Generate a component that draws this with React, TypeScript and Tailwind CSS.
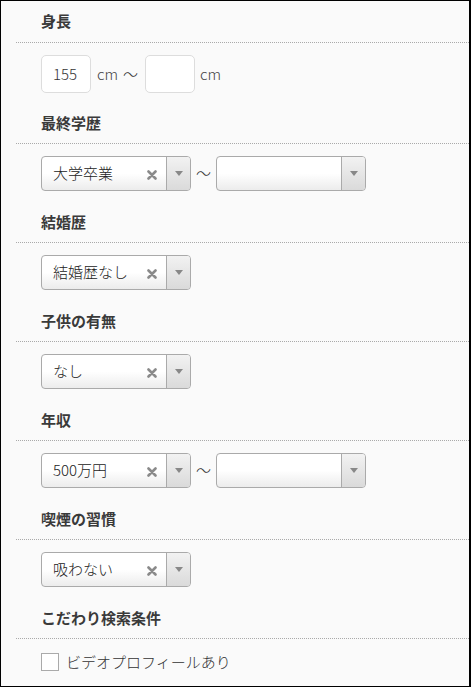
import * as React from 'react';

const font = { fontFamily: '"Noto Sans CJK JP", "Noto Sans", sans-serif' };

function Heading({ label, first = false }: { label: string; first?: boolean }) {
  return (
    <div
      className={`${first ? 'h-[42px]' : 'h-[41px]'} flex items-center pl-[25px] border-b border-dotted border-[#aaa] text-[15px] font-bold text-[#3a3a3a]`}
    >
      {label}
    </div>
  );
}

function ClearIcon() {
  return (
    <svg width="10" height="10" viewBox="0 0 10 10" className="mt-[3px]">
      <path d="M1.5 1.5 L8.5 8.5 M8.5 1.5 L1.5 8.5" stroke="#8a8a8a" strokeWidth="2.6" strokeLinecap="round" />
    </svg>
  );
}

function Select({ value }: { value?: string }) {
  return (
    <div className="w-[150px] h-[35px] flex rounded-[4px] border border-[#aaa] bg-linear-to-b from-white via-white to-[#ececec] overflow-hidden">
      <div className="flex-1 flex items-center pl-[11px] pr-[9px] text-[15px] font-light text-[#222]">
        <span className="flex-1">{value}</span>
        {value && <ClearIcon />}
      </div>
      <div className="w-[24px] flex items-center justify-center border-l border-[#aaa] bg-linear-to-b from-[#f2f2f2] to-[#dadada]">
        <svg width="8" height="6" viewBox="0 0 8 6">
          <path d="M0 0 L8 0 L4 5 Z" fill="#888" />
        </svg>
      </div>
    </div>
  );
}

function NumInput({ value }: { value?: string }) {
  return (
    <div className="w-[50px] h-[38px] flex items-center pl-[11px] rounded-[5px] border border-[#ddd] bg-white text-[15px] font-light text-[#333]">
      {value}
    </div>
  );
}

function Tilde() {
  return <span className="self-center mb-[2px] text-[15px] font-light text-[#333] leading-none">〜</span>;
}

export default function App() {
  return (
    <div
      className="w-[471px] h-[687px] box-border border border-r-2 border-black bg-[#fafafa] overflow-hidden"
      style={font}
    >
      <div className="ml-[15px]">
        <Heading label="身長" first />
        <div className="h-[60px] pt-[12px] pl-[25px] flex items-start">
          <div className="flex items-center">
            <NumInput value="155" />
            <span className="ml-[6px] text-[15px] font-light text-[#444]">cm</span>
            <span className="ml-[5px] flex"><Tilde /></span>
            <div className="ml-[7px]"><NumInput /></div>
            <span className="ml-[5px] text-[15px] font-light text-[#444]">cm</span>
          </div>
        </div>

        <Heading label="最終学歴" />
        <div className="h-[58px] pt-[12px] pl-[25px] flex items-start">
          <div className="flex items-center">
            <Select value="大学卒業" />
            <span className="ml-[5px] flex"><Tilde /></span>
            <div className="ml-[5px]"><Select /></div>
          </div>
        </div>

        <Heading label="結婚歴" />
        <div className="h-[58px] pt-[12px] pl-[25px] flex items-start">
          <Select value="結婚歴なし" />
        </div>

        <Heading label="子供の有無" />
        <div className="h-[58px] pt-[12px] pl-[25px] flex items-start">
          <Select value="なし" />
        </div>

        <Heading label="年収" />
        <div className="h-[58px] pt-[12px] pl-[25px] flex items-start">
          <div className="flex items-center">
            <Select value="500万円" />
            <span className="ml-[5px] flex"><Tilde /></span>
            <div className="ml-[5px]"><Select /></div>
          </div>
        </div>

        <Heading label="喫煙の習慣" />
        <div className="h-[58px] pt-[12px] pl-[25px] flex items-start">
          <Select value="吸わない" />
        </div>

        <Heading label="こだわり検索条件" />
        <div className="pt-[12px] pl-[25px] flex items-center">
          <span className="w-[18px] h-[18px] border border-[#aaa] bg-white" />
          <span className="ml-[7px] text-[15px] font-light text-[#333]">ビデオプロフィールあり</span>
        </div>
      </div>
    </div>
  );
}
